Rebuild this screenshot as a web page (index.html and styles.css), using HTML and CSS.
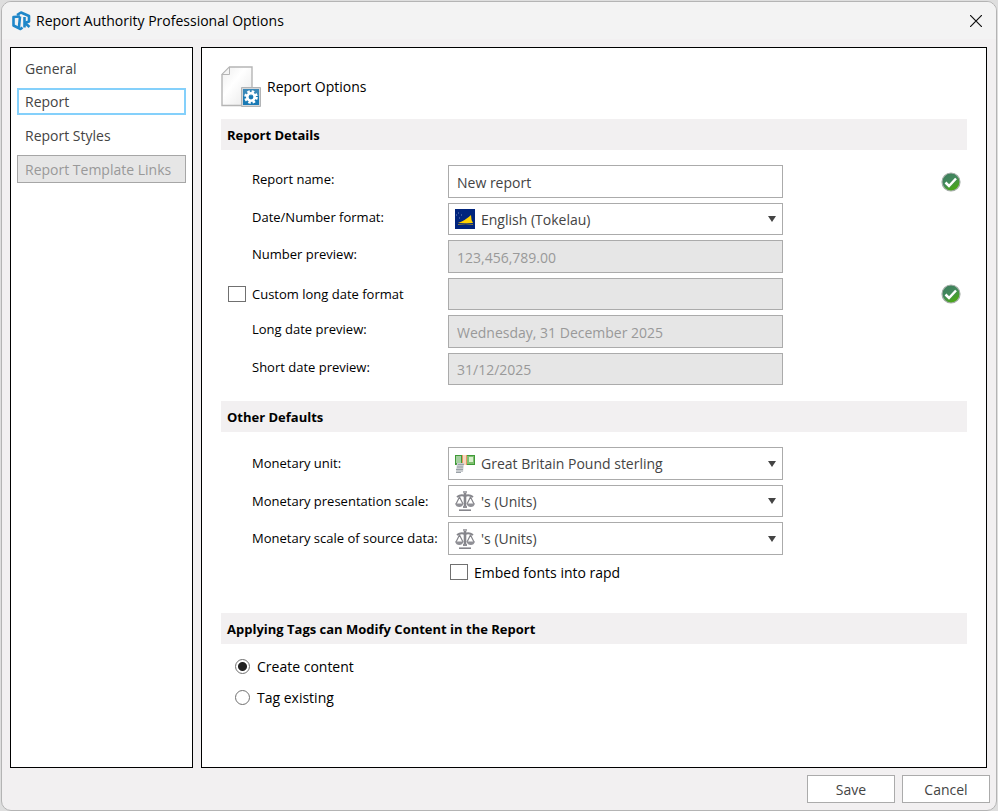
FILE: index.html
```html
<!DOCTYPE html>
<html lang="en">
<head>
  <meta charset="UTF-8">
  <meta name="viewport" content="width=device-width, initial-scale=1.0">
  <title>Report Authority Professional Options</title>
  <link rel="stylesheet" href="styles.css">
</head>
<body>

  <!-- Shared icons -->
  <svg class="sprite" aria-hidden="true">
    <linearGradient id="tickFill" x1="0" y1="0" x2="0.6" y2="1">
      <stop offset="0" stop-color="#3c7a5c"/>
      <stop offset="0.55" stop-color="#438a5c"/>
      <stop offset="0.9" stop-color="#4aa51c"/>
    </linearGradient>
    <symbol id="tick" viewBox="0 0 20 20">
      <circle cx="10" cy="10" r="9" fill="url(#tickFill)" stroke="#a3aca6" stroke-width="1.2"/>
      <path d="M4.500 10.500l3.500 3.500L15 6.500" fill="none" stroke="#fff" stroke-width="2.5"/>
    </symbol>
    <symbol id="scales" viewBox="0 0 20 20">
      <g fill="none" stroke="#85858b">
        <path d="M10 2v15" stroke-width="2.6"/>
        <path d="M8 1h4" stroke-width="1.4"/>
        <path d="M2 6q4-3 8-1q4-2 8 1" stroke-width="2"/>
        <path d="M4.500 6L1 13M4.500 6L8 13M15.500 6L12 13M15.500 6l3.500 7" stroke-width="1.2"/>
        <path d="M4 19.200h12" stroke-width="1.6"/>
      </g>
      <path d="M0 12.500h8.500q-1 3.500-4.200 3.500T0 12.500zM11.500 12.500H20q-1 3.500-4.200 3.500t-4.300-3.500zM8 15h4v2H8z" fill="#909096"/>
    </symbol>
  </svg>

  <div class="dialog">
    <header class="titlebar">
      <svg class="logo" viewBox="0 0 20 20">
        <g fill="none" stroke="#1f87c9" stroke-width="2.600" stroke-linejoin="round">
          <path d="M9 5.500L2.500 6v8.500L9.500 18l2-1.500"/>
          <path d="M6 4l4-2.500L18 5v5.500l-4.500 1.500"/>
          <path d="M9 5.500L8 16M13.500 6v10.500M14 12l4.500 4"/>
        </g>
      </svg>
      <h1>Report Authority Professional Options</h1>
      <button class="close" type="button" aria-label="Close">
        <svg viewBox="0 0 12 12"><path d="M0 0l12 12M12 0L0 12" stroke="#111" stroke-width="1.2"/></svg>
      </button>
    </header>

    <div class="content">
      <nav class="sidebar">
        <button type="button">General</button>
        <button type="button" class="active">Report</button>
        <button type="button">Report Styles</button>
        <button type="button" disabled>Report Template Links</button>
      </nav>

      <form class="panel" id="optionsForm">
        <div class="panel-title">
          <svg viewBox="0 0 40 41">
            <linearGradient id="pageFill" x1="0" y1="0" x2="1" y2="1">
              <stop offset="0" stop-color="#eeeeee"/>
              <stop offset="0.4" stop-color="#ffffff"/>
              <stop offset="1" stop-color="#e6e6e6"/>
            </linearGradient>
            <path d="M8.500 1H31v38.500H1V8.500z" fill="url(#pageFill)" stroke="#b5b5b5" stroke-width="1.4"/>
            <path d="M8.500 1v7.500H1z" fill="#f4f4f4" stroke="#b5b5b5"/>
            <path d="M20.500 21.500h19v19h-19z" fill="#d4d6d8" stroke="#b2b4b6"/>
            <path d="M22 23h16v16H22z" fill="#1a7ab5"/>
            <path d="M22 23h16v7H22z" fill="#3a88b8"/>
            <circle cx="30" cy="31" r="5.500" fill="none" stroke="#fff" stroke-width="2.600" stroke-dasharray="2.500 1.820"/>
            <circle cx="30" cy="31" r="3.700" fill="none" stroke="#fff" stroke-width="2.600"/>
          </svg>
          <h2>Report Options</h2>
        </div>

        <h3>Report Details</h3>
        <div class="fields">
          <label for="reportName">Report name:</label>
          <input type="text" id="reportName" value="New report">
          <svg class="tick"><use href="#tick"/></svg>

          <label for="format">Date/Number format:</label>
          <div class="dropdown">
            <svg viewBox="0 0 20 20">
              <path d="M0 0h20v20H0z" fill="#00247d"/>
              <path d="M3 14Q11 11 16 6q0 5 2 8z" fill="#fed100"/>
              <path d="M3 15.500q8-1.500 15 0" fill="none" stroke="#8d8139"/>
              <path d="M1 6h1M3 4h1M6 6h1M4 9h1" stroke="#7388bb"/>
            </svg>
            <select id="format"><option>English (Tokelau)</option></select>
          </div>

          <label for="numberPreview">Number preview:</label>
          <input type="text" id="numberPreview" value="123,456,789.00" disabled>

          <div class="check">
            <input type="checkbox" id="customDate">
            <label for="customDate">Custom long date format</label>
          </div>
          <input type="text" id="customFormat" aria-label="Custom long date format" disabled>
          <svg class="tick"><use href="#tick"/></svg>

          <label for="longDate">Long date preview:</label>
          <input type="text" id="longDate" value="Wednesday, 31 December 2025" disabled>

          <label for="shortDate">Short date preview:</label>
          <input type="text" id="shortDate" value="31/12/2025" disabled>
        </div>

        <h3>Other Defaults</h3>
        <div class="fields defaults">
          <label for="unit">Monetary unit:</label>
          <div class="dropdown">
            <svg viewBox="0 0 20 20">
              <path d="M0 1h20v10H0z" fill="#3f9a38"/>
              <path d="M1 2h5v7H1z" fill="#a4cf9f"/>
              <path d="M12 2h7v8h-7z" fill="#7fc06f"/>
              <path d="M14 3h4v5h-4z" fill="#d9edce"/>
              <path d="M7 1h4v10H7z" fill="#f5d9c0"/>
              <path d="M7.500 1v10M11.500 1v10" stroke="#e89468"/>
              <path d="M2 9h7l-1 9H1z" fill="#c9cccf"/>
              <path d="M3 10.500h6M2 13h6M1 15.500h7M1 18.500h5" stroke="#9aa1a8"/>
            </svg>
            <select id="unit"><option>Great Britain Pound sterling</option></select>
          </div>

          <label for="scale">Monetary presentation scale:</label>
          <div class="dropdown">
            <svg><use href="#scales"/></svg>
            <select id="scale"><option>'s (Units)</option></select>
          </div>

          <label for="sourceScale">Monetary scale of source data:</label>
          <div class="dropdown">
            <svg><use href="#scales"/></svg>
            <select id="sourceScale"><option>'s (Units)</option></select>
          </div>
          <div class="embed">
            <input type="checkbox" id="embedFonts">
            <label for="embedFonts">Embed fonts into rapd</label>
          </div>
        </div>

        <h3>Applying Tags can Modify Content in the Report</h3>
        <div class="radios">
          <label><input type="radio" name="tags" checked>Create content</label>
          <label><input type="radio" name="tags">Tag existing</label>
        </div>
      </form>
    </div>

    <footer class="actions">
      <button type="submit" form="optionsForm">Save</button>
      <button type="button">Cancel</button>
    </footer>
  </div>

</body>
</html>
```
FILE: styles.css
```css
* {
  box-sizing: border-box;
}
body {
  margin: 0;
  padding: 1px 1px 0;
  background-color: #dedede;
  font-family: "Open Sans", "Noto Sans", sans-serif;
  font-size: 14px;
  color: #000;
}
h1, h2, h3 {
  margin: 0;
  font-size: 14px;
  font-weight: normal;
}
button, input, select {
  font: inherit;
  color: #444;
}
svg {
  display: block;
  flex: none;
}
.sprite {
  position: absolute;
  width: 0;
  height: 0;
}
.dialog {
  display: flex;
  flex-direction: column;
  min-height: calc(100vh - 1px);
  border: 1px solid #b4b4b4;
  border-radius: 10px;
  background-color: #f2f0f1;
  overflow: hidden;
}
.titlebar {
  display: flex;
  align-items: center;
  height: 37px;
  padding: 0 14px 0 9px;
  background-color: #f3f3f3;
}
.logo {
  width: 20px;
  height: 20px;
  margin-right: 5px;
}
.close {
  margin-left: auto;
  padding: 0;
  border: none;
  background: none;
}
.close svg {
  width: 12px;
  height: 12px;
}
.content {
  display: flex;
  flex: 1;
  gap: 8px;
  padding: 8px 9px 0 8px;
}

/* Left menu */
.sidebar {
  display: flex;
  flex-direction: column;
  gap: 6px;
  width: 183px;
  padding: 6px;
  border: 1px solid #000;
  background-color: #fff;
}
.sidebar button {
  height: 28px;
  padding: 0 7px;
  border: 1px solid transparent;
  background-color: #fff;
  text-align: left;
  white-space: nowrap;
}
.sidebar .active {
  height: 27px;
  border: 2px solid #84d0fb;
  padding: 0 6px;
}
.sidebar button:disabled {
  border-color: #a6a6a6;
  background-color: #e6e6e6;
  color: #999;
}

/* Report options */
.panel {
  flex: 1;
  padding: 18px 19px;
  border: 1px solid #000;
  background-color: #fff;
}
.panel-title {
  display: flex;
  align-items: center;
  gap: 6px;
  margin-bottom: 12px;
}
.panel-title svg {
  width: 40px;
  height: 41px;
}
h3 {
  height: 31px;
  padding-left: 6px;
  background-color: #f2f0f1;
  font-size: 13px;
  font-weight: bold;
  line-height: 32px;
}
.fields {
  display: grid;
  grid-template-columns: 190px 335px 1fr;
  grid-auto-rows: 33px 32px;
  column-gap: 6px;
  row-gap: 5px;
  padding: 15px 6px 16px 31px;
}
.fields > * {
  grid-column: 2;
}
.fields > label {
  grid-column: 1;
  padding-top: 5px;
  font-size: 13px;
  white-space: nowrap;
}
.fields > input, .dropdown {
  width: 100%;
  height: 100%;
  border: 1px solid #ababab;
  background-color: #fff;
}
.fields > input {
  padding: 1px 8px 0;
}
.fields > input:disabled {
  background-color: #e6e6e6;
  color: #999;
}
.fields > .tick {
  grid-column: 3;
  justify-self: end;
  align-self: center;
  width: 20px;
  height: 20px;
}
.check {
  grid-column: 1;
  display: flex;
  align-items: center;
  gap: 6px;
  margin-left: -24px;
  font-size: 13px;
}
.dropdown {
  position: relative;
  display: flex;
  align-items: center;
}
.dropdown svg {
  position: absolute;
  left: 6px;
  width: 20px;
  height: 20px;
  pointer-events: none;
}
.dropdown select {
  width: 100%;
  height: 100%;
  padding: 0 24px 0 32px;
  border: none;
  background: none;
  appearance: none;
}
.dropdown::after {
  content: "";
  position: absolute;
  right: 6px;
  border: 4px solid transparent;
  border-top: 6px solid #444;
  border-bottom: none;
  pointer-events: none;
}
input[type="checkbox"] {
  appearance: none;
  width: 18px;
  height: 16px;
  margin: 0;
  border: 1px solid #707070;
  background-color: #fff;
}
input[type="checkbox"]:checked {
  background-color: #707070;
}
.fields.defaults {
  padding-bottom: 21px;
}
.defaults > label {
  padding-top: 7px;
}
.embed {
  display: flex;
  align-items: center;
  gap: 6px;
  height: 24px;
  padding-left: 2px;
}
.radios {
  display: flex;
  flex-direction: column;
  align-items: flex-start;
  gap: 9px;
  padding: 11px 14px;
}
.radios label {
  display: flex;
  align-items: center;
  gap: 7px;
  height: 22px;
}
input[type="radio"] {
  appearance: none;
  width: 15px;
  height: 15px;
  margin: 0;
  border: 1px solid #707070;
  border-radius: 50%;
}
input[type="radio"]:checked {
  background: radial-gradient(circle, #222 4px, #fff 5px);
}

.actions {
  display: flex;
  justify-content: flex-end;
  gap: 7px;
  padding: 7px 6px;
}
.actions button {
  width: 88px;
  height: 28px;
  border: 1px solid #ababab;
  background-color: #fff;
}
```
